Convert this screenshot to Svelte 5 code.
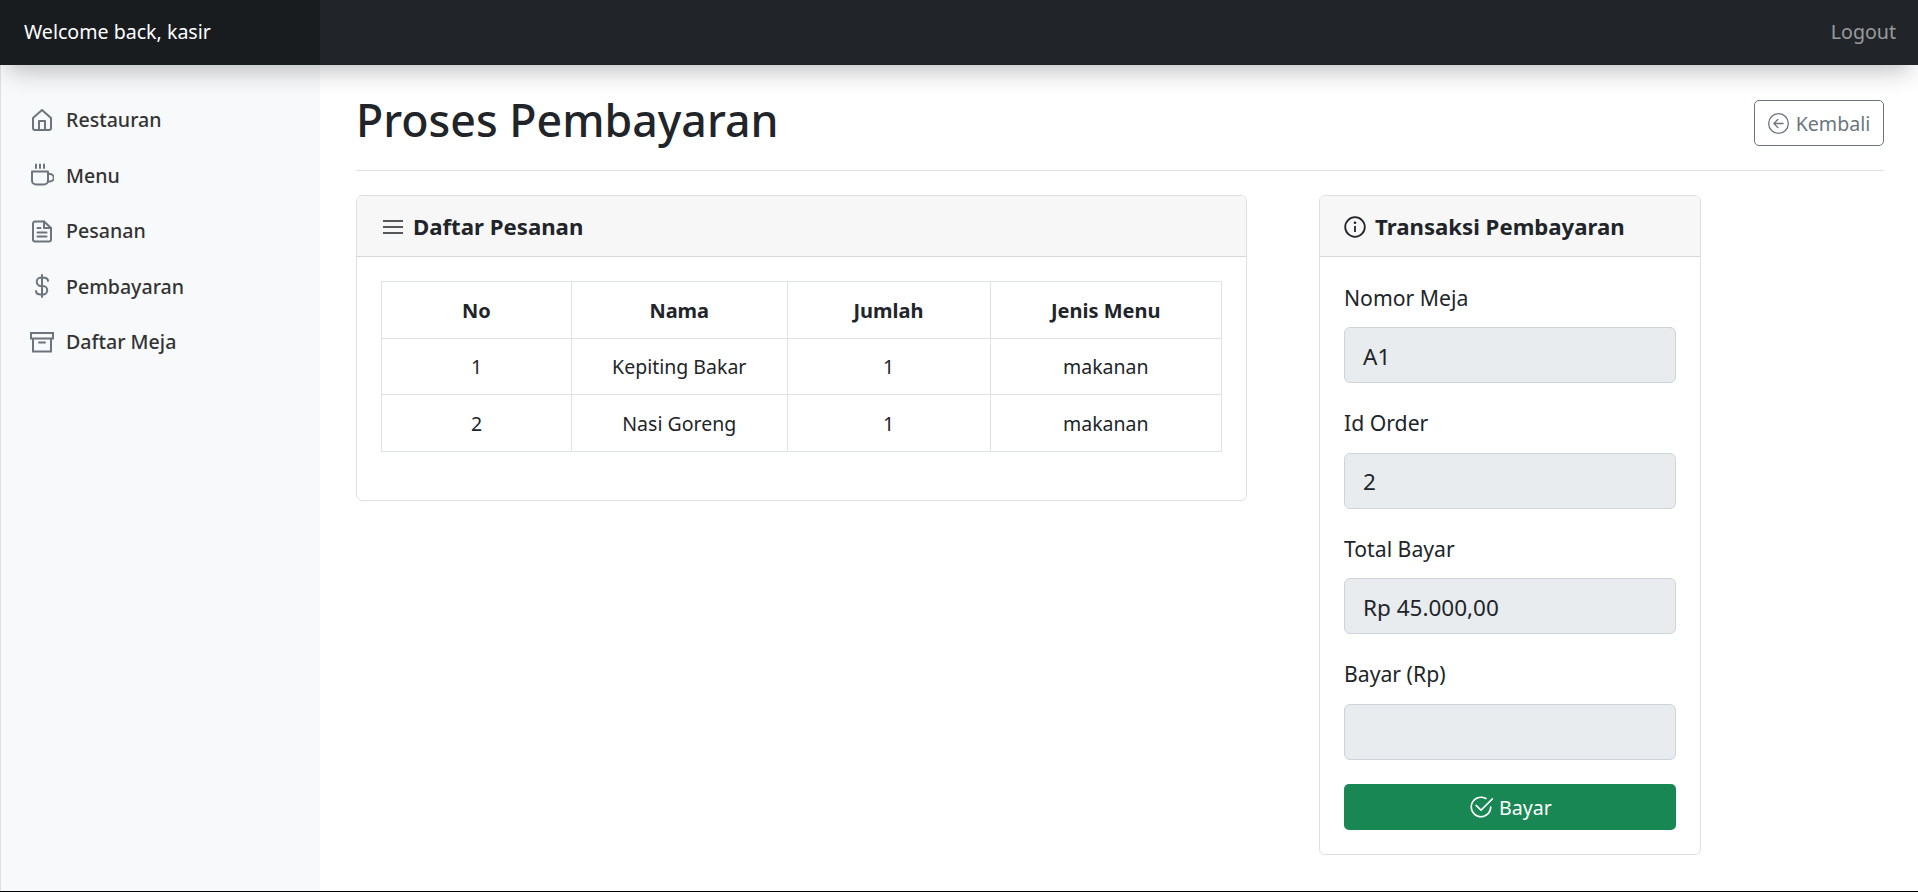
<script>
  const navItems = ['Restauran', 'Menu', 'Pesanan', 'Pembayaran', 'Daftar Meja']

  const orders = [
    { no: 1, nama: 'Kepiting Bakar', jumlah: 1, jenis: 'makanan' },
    { no: 2, nama: 'Nasi Goreng', jumlah: 1, jenis: 'makanan' },
  ]

  const fields = [
    { label: 'Nomor Meja', value: 'A1' },
    { label: 'Id Order', value: '2' },
    { label: 'Total Bayar', value: 'Rp 45.000,00' },
    { label: 'Bayar (Rp)', value: '' },
  ]
</script>

<div class="page">
  <header>
    <div class="brand">Welcome back, kasir</div>
    <a class="logout" href="#top">Logout</a>
  </header>

  <div class="layout">
    <nav>
      {#each navItems as item, i}
        <a href="#top" class="nav-link">
          <svg viewBox="0 0 24 24" class="nav-icon">
            {#if i === 0}
              <path d="M3 10 12 2l9 8v10a2 2 0 0 1-2 2H5a2 2 0 0 1-2-2z" />
              <path d="M9 22v-9h6v9" />
            {:else if i === 1}
              <path d="M2 8.5h16v9a4 4 0 0 1-4 4H6a4 4 0 0 1-4-4z" />
              <path d="M18 11h2a3.7 3.7 0 0 1 0 7.5h-2M6 1.5V5M10 1.5V5M14 1.5V5" />
            {:else if i === 2}
              <path d="M14 2.5H5a2 2 0 0 0-2 2v16a2 2 0 0 0 2 2h14a2 2 0 0 0 2-2V9z" />
              <path d="M14 2.5V9h7M7.5 9h3M7.5 13.5h9M7.5 17.5h9" />
            {:else if i === 3}
              <path d="M12 1v22M18 7c0-2.5-2.5-3.5-5-3.5h-2a4.25 4.25 0 0 0 0 8.5h2a4.25 4.25 0 0 1 0 8.5h-2c-2.5 0-5-1-5-3.5" />
            {:else}
              <path stroke-linejoin="miter" d="M1 3h22v5.5H1zM3 8.5V21.500h18V8.5M9 12.500h6" />
            {/if}
          </svg>
          {item}
        </a>
      {/each}
    </nav>

    <main>
      <div class="title-row">
        <h1>Proses Pembayaran</h1>
        <button class="back">
          <svg viewBox="0 0 16 16" class="bi">
            <path d="M1 8a7 7 0 1 0 14 0A7 7 0 0 0 1 8m15 0A8 8 0 1 1 0 8a8 8 0 0 1 16 0m-4.5-.5a.5.5 0 0 1 0 1H5.707l2.147 2.146a.5.5 0 0 1-.708.708l-3-3a.5.5 0 0 1 0-.708l3-3a.5.5 0 1 1 .708.708L5.707 7.5z" />
          </svg>
          Kembali
        </button>
      </div>

      <div class="cards">
        <section class="card">
          <h2>
            <svg viewBox="0 0 24 14" class="list">
              <path d="M2 1h20M2 7h20M2 13h20" />
            </svg>
            Daftar Pesanan
          </h2>
          <div class="card-body orders">
            <table>
              <thead>
                <tr>
                  <th class="c1">No</th>
                  <th class="c2">Nama</th>
                  <th class="c3">Jumlah</th>
                  <th>Jenis Menu</th>
                </tr>
              </thead>
              <tbody>
                {#each orders as order}
                  <tr>
                    <td>{order.no}</td>
                    <td>{order.nama}</td>
                    <td>{order.jumlah}</td>
                    <td>{order.jenis}</td>
                  </tr>
                {/each}
              </tbody>
            </table>
          </div>
        </section>

        <section class="card">
          <h2>
            <svg viewBox="0 0 22 22" class="info">
              <circle cx="11" cy="11" r="9.8" />
              <path d="M11 10v6" />
              <circle class="dot" cx="11" cy="6.8" r="1.3" />
            </svg>
            Transaksi Pembayaran
          </h2>
          <div class="card-body form">
            {#each fields as field}
              <div class="field">
                <span class="label">{field.label}</span>
                <div class="input">{field.value}</div>
              </div>
            {/each}
            <button class="pay">
              <svg viewBox="0 0 16 16" class="bi check">
                <path d="M2.5 8a5.5 5.5 0 0 1 8.25-4.764.5.5 0 0 0 .5-.866A6.5 6.5 0 1 0 14.5 8a.5.5 0 0 0-1 0 5.5 5.5 0 1 1-11 0" />
                <path d="M15.354 3.354a.5.5 0 0 0-.708-.708L8 9.293 5.354 6.646a.5.5 0 1 0-.708.708l3 3a.5.5 0 0 0 .708 0z" />
              </svg>
              Bayar
            </button>
          </div>
        </section>
      </div>
    </main>
  </div>
</div>

<style>
  :global(body) {
    margin: 0;
    background: #fff;
  }
  .page {
    height: 892px;
    box-sizing: border-box;
    border-bottom: 1px solid #000;
    display: flex;
    flex-direction: column;
    overflow: hidden;
    font-family: 'Noto Sans', 'Open Sans', sans-serif;
    font-size: 19.6px;
    color: #212529;
  }
  header {
    height: 65px;
    flex: none;
    display: flex;
    align-items: center;
    justify-content: space-between;
    background: #212529;
    box-shadow: 0 14px 24px -8px rgba(0, 0, 0, 0.25);
    position: relative;
    z-index: 2;
  }
  .brand {
    width: 320px;
    box-sizing: border-box;
    height: 100%;
    padding: 0 24px 3px;
    display: flex;
    align-items: center;
    background: #191c1f;
    color: #fff;
    white-space: nowrap;
  }
  .logout {
    color: rgba(255, 255, 255, 0.55);
    text-decoration: none;
    margin: 0 22px 3px 0;
  }
  .layout {
    flex: 1;
    display: flex;
    min-height: 0;
  }
  nav {
    width: 320px;
    flex: none;
    box-sizing: border-box;
    background: #f8f9fa;
    padding-top: 27px;
    box-shadow: inset 1px 0 0 rgba(0, 0, 0, 0.1);
  }
  .nav-link {
    height: 55.5px;
    display: flex;
    align-items: center;
    gap: 12px;
    padding-left: 30px;
    color: #333;
    font-weight: 500;
    text-decoration: none;
  }
  .nav-icon {
    width: 24px;
    height: 24px;
    flex: none;
    fill: none;
    stroke: #6c757d;
    stroke-width: 2;
    stroke-linejoin: round;
    stroke-linecap: round;
  }
  main {
    flex: 1;
    min-width: 0;
    padding: 0 34px 0 36px;
  }
  .title-row {
    height: 106px;
    box-sizing: border-box;
    display: flex;
    align-items: center;
    justify-content: space-between;
    border-bottom: 1px solid #dee2e6;
    padding-top: 11px;
  }
  h1 {
    margin: 0 0 7px;
    font-size: 44.7px;
    font-weight: 500;
    line-height: 1.2;
  }
  .back {
    height: 46px;
    width: 130px;
    padding: 0;
    display: flex;
    align-items: center;
    justify-content: center;
    gap: 7px;
    background: #fff;
    border: 1px solid #6c757d;
    border-radius: 5px;
    color: #6c757d;
    font: inherit;
  }
  .bi {
    width: 21px;
    height: 21px;
    fill: currentColor;
    flex: none;
  }
  .check {
    width: 26px;
    height: 26px;
  }
  .list {
    width: 24px;
    height: 14px;
    flex: none;
    fill: none;
    stroke: #212529;
    stroke-width: 1.5;
    margin-right: -1px;
  }
  .info {
    width: 22px;
    height: 22px;
    flex: none;
    fill: none;
    stroke: #212529;
    stroke-width: 1.8;
  }
  .info .dot {
    fill: #212529;
    stroke: none;
  }
  .cards {
    display: grid;
    grid-template-columns: 891px 382px;
    column-gap: 72px;
    align-items: start;
    margin-top: 24px;
  }
  .card {
    border: 1px solid rgba(0, 0, 0, 0.125);
    border-radius: 6px;
    overflow: hidden;
  }
  h2 {
    margin: 0;
    height: 61px;
    box-sizing: border-box;
    padding: 1px 24px 0;
    display: flex;
    align-items: center;
    gap: 9px;
    background: #f7f7f7;
    border-bottom: 1px solid rgba(0, 0, 0, 0.125);
    font-size: 22.2px;
    font-weight: 700;
    color: #212529;
    white-space: nowrap;
  }
  .card-body {
    padding: 24px;
  }
  .orders {
    padding-bottom: 48px;
  }
  .form {
    padding-top: 24.5px;
  }
  table {
    width: 100%;
    border-collapse: collapse;
    table-layout: fixed;
  }
  th,
  td {
    height: 56.6px;
    padding: 1px 0 0;
    box-sizing: border-box;
    border: 1px solid #dee2e6;
    text-align: center;
    font-size: 19.5px;
  }
  th {
    font-size: 20px;
    font-weight: 700;
  }
  .c1 {
    width: 190px;
  }
  .c2 {
    width: 215.5px;
  }
  .c3 {
    width: 203px;
  }
  .field {
    margin-bottom: 24px;
  }
  .label {
    display: block;
    height: 45.5px;
    line-height: 32px;
    font-size: 21.2px;
  }
  .input {
    height: 56px;
    box-sizing: border-box;
    padding: 2px 18px 0;
    display: flex;
    align-items: center;
    background: #e9ecef;
    border: 1px solid #ced4da;
    border-radius: 6px;
    font-size: 22.5px;
  }
  .pay {
    width: 100%;
    height: 46px;
    padding: 1px 0 0;
    display: flex;
    align-items: center;
    justify-content: center;
    gap: 5px;
    background: #198754;
    border: 0;
    border-radius: 5px;
    color: #fff;
    font: inherit;
    font-size: 19.6px;
  }
</style>
